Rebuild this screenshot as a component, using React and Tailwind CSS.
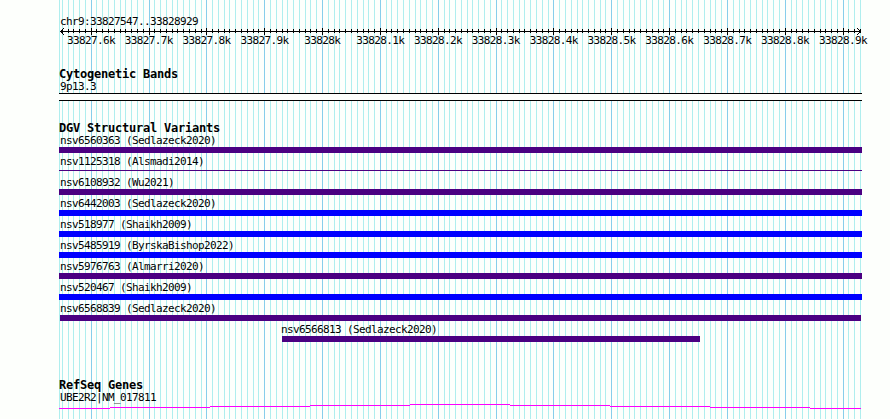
import React from 'react'

const START = 33827547
const SCALE = 800 / 1383
const toX = (bp) => Math.round(60 + (bp - START) * SCALE)

const TICKS = Array.from({ length: 139 }, (_, i) => {
    const bp = 33827550 + i * 10
    return { x: toX(bp), major: bp % 100 === 0 }
})

const RULER_LABELS = [
    '33827.6k', '33827.7k', '33827.8k', '33827.9k', '33828k', '33828.1k', '33828.2k',
    '33828.3k', '33828.4k', '33828.5k', '33828.6k', '33828.7k', '33828.8k', '33828.9k',
]

const VARIANTS = [
    { name: 'nsv6560363 (Sedlazeck2020)', bar: 'w-[803px] h-1.5 bg-[#4b0082]' },
    { name: 'nsv1125318 (Alsmadi2014)', bar: 'w-[803px] h-px mt-[2px] mb-[3px] bg-[#4b0082]' },
    { name: 'nsv6108932 (Wu2021)', bar: 'w-[803px] h-1.5 bg-[#4b0082]' },
    { name: 'nsv6442003 (Sedlazeck2020)', bar: 'w-[803px] h-1.5 bg-[#0000ff]' },
    { name: 'nsv518977 (Shaikh2009)', bar: 'w-[803px] h-1.5 bg-[#0000ff]' },
    { name: 'nsv5485919 (ByrskaBishop2022)', bar: 'w-[803px] h-1.5 bg-[#0000ff]' },
    { name: 'nsv5976763 (Almarri2020)', bar: 'w-[803px] h-1.5 bg-[#4b0082]' },
    { name: 'nsv520467 (Shaikh2009)', bar: 'w-[803px] h-1.5 bg-[#0000ff]' },
    { name: 'nsv6568839 (Sedlazeck2020)', bar: 'ml-px w-[801px] h-1.5 bg-[#4b0082]' },
    { name: 'nsv6566813 (Sedlazeck2020)', row: 'pl-[223px]', label: '-ml-[2px]', bar: 'w-[418px] h-1.5 bg-[#4b0082]' },
]

// [start, end, y offset]
const GENE_STEPS = [
    [0, 51, 4], [51, 151, 3], [151, 251, 2], [251, 351, 1], [351, 451, 0],
    [451, 551, 1], [551, 651, 2], [651, 751, 3], [751, 802, 4],
]

function GridLines() {
    return (
        <svg className="absolute inset-0" width="890" height="419" shapeRendering="crispEdges">
            <rect x="59" y="0" width="1" height="419" fill="#afeeee" />
            {TICKS.map(({ x, major }) => (
                <rect key={x} x={x} y="0" width="1" height="419" fill={major ? '#87ceeb' : '#afeeee'} />
            ))}
        </svg>
    )
}

function Ruler() {
    return (
        <svg className="block" width="890" height="7" shapeRendering="crispEdges">
            <rect x="60" y="3" width="801" height="1" />
            {TICKS.map(({ x, major }) => (
                <rect key={x} x={x} y={major ? 0 : 1} width="1" height={major ? 7 : 4} />
            ))}
            <path d="M61 2h1v1h-1zM62 1h1v1h-1zM63 0h1v1h-1zM61 4h1v1h-1zM62 5h1v1h-1zM63 6h1v1h-1z" />
            <path d="M859 2h1v1h-1zM858 1h1v1h-1zM857 0h1v1h-1zM859 4h1v1h-1zM858 5h1v1h-1zM857 6h1v1h-1z" />
        </svg>
    )
}

function Label({ children, className = '' }) {
    return (
        <div className={`h-3 pl-px text-[11px] leading-[12px] tracking-[-0.622px] whitespace-pre ${className}`}>
            {children}
        </div>
    )
}

function TrackTitle({ children }) {
    return (
        <h2 className="h-[13px] text-[12px] leading-[13px] font-bold tracking-[-0.224px] whitespace-pre">
            {children}
        </h2>
    )
}

export default function App() {
    return (
        <div className="relative w-[890px] h-[419px] overflow-hidden bg-[#fdfffc] text-black font-['DejaVu_Sans_Mono',monospace]">
            <GridLines />

            <div className="relative flex flex-col pt-4">
                <Label className="ml-[59px]">chr9:33827547..33828929</Label>
                <Ruler />
                <div className="flex h-3 pl-[62px] text-[11px] leading-[12px] tracking-[-0.622px]">
                    {RULER_LABELS.map((text) => (
                        <span key={text} className="w-[57.85px] shrink-0 text-center whitespace-nowrap">{text}</span>
                    ))}
                </div>

                <section className="ml-[59px] mt-[21px]">
                    <TrackTitle>Cytogenetic Bands</TrackTitle>
                    <Label>9p13.3</Label>
                    <div className="w-[803px] h-2 border-y border-black bg-[#fdfffc]" />
                </section>

                <section className="ml-[59px] mt-[21px]">
                    <TrackTitle>DGV Structural Variants</TrackTitle>
                    {VARIANTS.map(({ name, row = '', label = '', bar }) => (
                        <div key={name} className={`flex flex-col h-[21px] ${row}`}>
                            <Label className={label}>{name}</Label>
                            <div className={`shrink-0 ${bar}`} />
                        </div>
                    ))}
                </section>

                <section className="ml-[59px] mt-[34px]">
                    <TrackTitle>RefSeq Genes</TrackTitle>
                    <Label>UBE2R2|NM_017811</Label>
                    <svg className="block" width="803" height="5" shapeRendering="crispEdges">
                        {GENE_STEPS.map(([from, to, y]) => (
                            <rect key={from} x={from} y={y} width={to - from} height="1" fill="#ff00ff" />
                        ))}
                    </svg>
                </section>
            </div>
        </div>
    )
}
